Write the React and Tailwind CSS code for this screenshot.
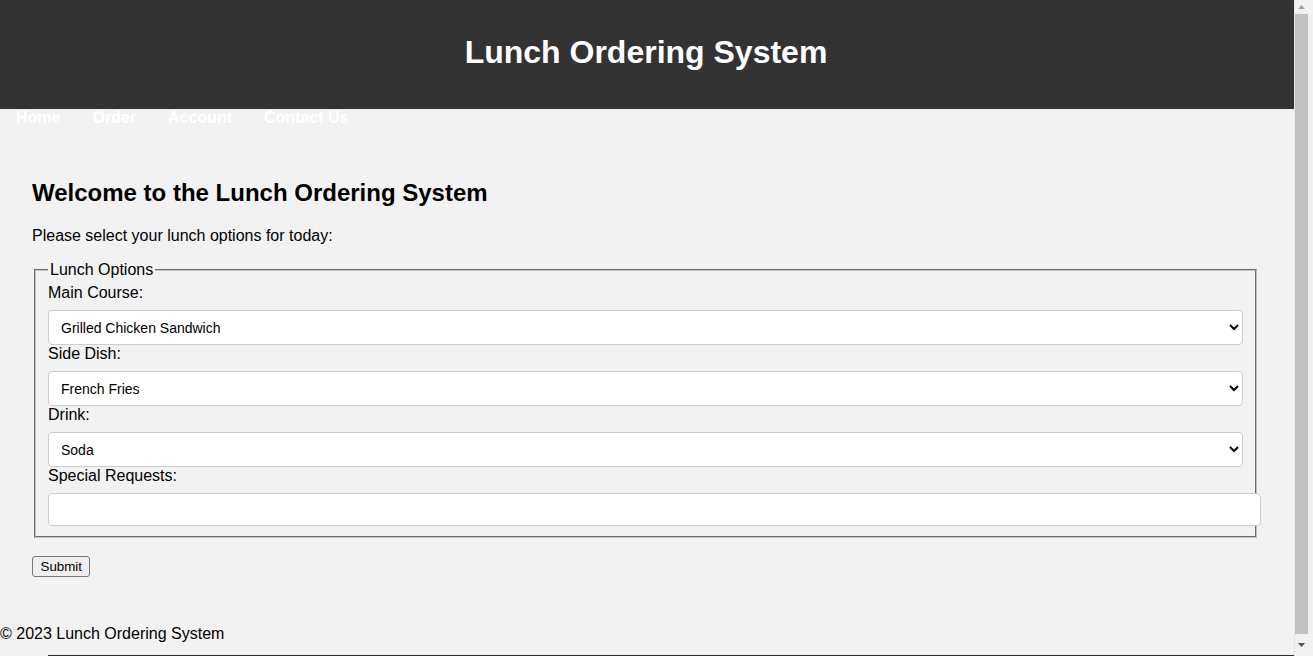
import React, { useState } from 'react';

const App = () => {
  const [main, setMain] = useState('Grilled Chicken Sandwich');
  const [side, setSide] = useState('French Fries');
  const [drink, setDrink] = useState('Soda');
  const [notes, setNotes] = useState('');

  const selectClass =
    'block w-full h-[35px] mt-2 px-2 bg-white border border-[#cccccc] rounded-[4px] text-[14px] text-black';

  return (
    <div className="min-h-screen bg-[#f2f2f2] text-black font-['Liberation_Sans',Arial,sans-serif]">
      <div className="w-[1294px]">
        {/* Header */}
        <header className="h-[109px] bg-[#333333] flex items-center justify-center pb-[5px] pr-[2px]">
          <h1 className="text-[32px] leading-[37px] font-bold text-white">Lunch Ordering System</h1>
        </header>

        {/* Nav */}
        <nav className="flex">
          <a href="#" className="px-4 text-white font-bold text-[16px] leading-[17px]">Home</a>
          <a href="#" className="px-4 text-white font-bold text-[16px] leading-[17px]">Order</a>
          <a href="#" className="px-4 text-white font-bold text-[16px] leading-[17px]">Account</a>
          <a href="#" className="px-4 text-white font-bold text-[16px] leading-[17px]">Contact Us</a>
        </nav>

        {/* Main content */}
        <main className="pl-8 pr-[35px] pt-[53px]">
          <h2 className="text-[24px] leading-[28px] font-bold">Welcome to the Lunch Ordering System</h2>
          <p className="mt-[20px] text-[16px] leading-[18px]">Please select your lunch options for today:</p>

          <form onSubmit={(e) => e.preventDefault()}>
            <fieldset className="mt-4 mx-[2px] border-2 [border-style:groove] border-[#c0c0c0] px-3 pt-[5px] pb-[10px]">
              <legend className="px-[2px] text-[16px] leading-[18px]">Lunch Options</legend>

              <label className="block text-[16px] leading-[18px]">Main Course:</label>
              <select className={selectClass} value={main} onChange={(e) => setMain(e.target.value)}>
                <option>Grilled Chicken Sandwich</option>
                <option>Veggie Burger</option>
                <option>Caesar Salad</option>
              </select>

              <label className="block text-[16px] leading-[18px]">Side Dish:</label>
              <select className={selectClass} value={side} onChange={(e) => setSide(e.target.value)}>
                <option>French Fries</option>
                <option>Onion Rings</option>
                <option>Side Salad</option>
              </select>

              <label className="block text-[16px] leading-[18px]">Drink:</label>
              <select className={selectClass} value={drink} onChange={(e) => setDrink(e.target.value)}>
                <option>Soda</option>
                <option>Water</option>
                <option>Iced Tea</option>
              </select>

              <label className="block text-[16px] leading-[18px]">Special Requests:</label>
              <input
                type="text"
                value={notes}
                onChange={(e) => setNotes(e.target.value)}
                className="block box-content w-full h-[17px] mt-2 px-2 py-[7px] bg-white border border-[#cccccc] rounded-[4px] text-[14px]"
              />
            </fieldset>

            <button
              type="submit"
              className="mt-[18px] px-[7.5px] h-[21px] bg-[#efefef] border border-[#767676] rounded-[3px] text-[13.33px] leading-[15px]"
            >
              Submit
            </button>
          </form>
        </main>

        {/* Footer */}
        <footer className="mt-[47px]">
          <p className="text-[16px] leading-[18px]">© 2023 Lunch Ordering System</p>
        </footer>
        <div className="mt-[12px] ml-12 h-[40px] bg-[#263238]"></div>
      </div>

      {/* Scrollbar track */}
      <div className="fixed top-0 right-0 h-screen w-[19px] bg-[#f1f1f1] border-l border-[#e6e6e6] flex flex-col items-start">
        <div className="h-[14px] w-[13px] flex items-center justify-center">
          <svg width="7" height="4" viewBox="0 0 7 4"><path d="M0 4 L3.5 0 L7 4 Z" fill="#a3a3a3" /></svg>
        </div>
        <div className="flex-1 w-[13px] bg-[#c1c1c1]"></div>
        <div className="h-[22px] w-[13px] flex items-center justify-center">
          <svg width="7" height="4" viewBox="0 0 7 4"><path d="M0 0 L3.5 4 L7 0 Z" fill="#505050" /></svg>
        </div>
      </div>
    </div>
  );
};

export default App;
